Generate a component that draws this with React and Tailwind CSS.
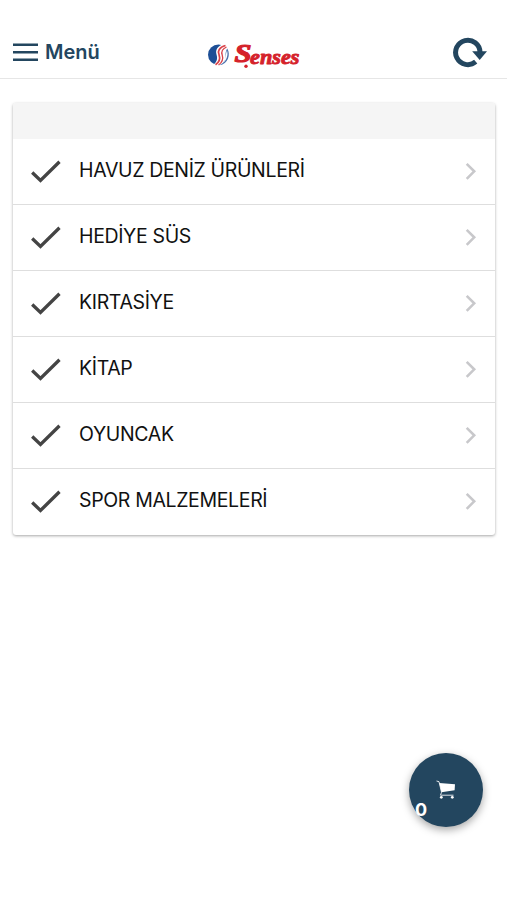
const categories = [
  'HAVUZ DENİZ ÜRÜNLERİ',
  'HEDİYE SÜS',
  'KIRTASİYE',
  'KİTAP',
  'OYUNCAK',
  'SPOR MALZEMELERİ',
]

function Logo() {
  return (
    <svg width="96" height="30" viewBox="0 0 96 30" role="img" aria-label="Senses">
      {/* emblem */}
      <ellipse cx="12.500" cy="14.800" rx="10.500" ry="10.200" fill="#1d4f96" />
      <path d="M18 4C11.500 6 9 10 10.500 14.500C12 19 10.500 22.500 7 25L16 26L23 20L24 9Z" fill="#fff" />
      <path d="M19.500 5.500C13 7.500 11.500 11 13 14.500C14.500 19 13 22.500 9.500 24.800" fill="none" stroke="#d9434a" strokeWidth="1.700" />
      <path d="M20.500 7C16 9 15 11.500 16.200 15C17.500 19 16 22.500 12.500 25" fill="none" stroke="#d9434a" strokeWidth="1.300" />
      <path d="M21.300 8.500C25 14.500 22 24 13.500 25.200C17.500 23 20 20 19.600 16C19.400 13 19.800 10.500 21.300 8.500Z" fill="#4a72ad" />
      <path d="M21 10.500C22.500 15 20.500 20 17.500 22.500C20 18.500 19.500 14 21 10.500Z" fill="#fff" />
      {/* wordmark */}
      <g
        className="font-['Liberation_Serif',serif] font-bold italic"
        fill="#d5222b"
        stroke="#d5222b"
        strokeLinejoin="round"
      >
        <text x="28.500" y="22.300" fontSize="26" strokeWidth="1.200" textLength="17" lengthAdjust="spacingAndGlyphs">S</text>
        <text x="44" y="24" fontSize="21" strokeWidth="0.900" textLength="49.500" lengthAdjust="spacingAndGlyphs">enses</text>
      </g>
      <circle cx="40" cy="26.300" r="1.700" fill="#d5222b" />
    </svg>
  )
}

function MenuIcon() {
  return (
    <svg width="25" height="20" viewBox="0 0 25 20" fill="none" stroke="#23465f" strokeWidth="2.400">
      <path d="M0 2.800H25M0 10.300H25M0 17.800H25" />
    </svg>
  )
}

function RefreshIcon() {
  return (
    <svg width="36" height="32" viewBox="0 0 36 32">
      <path d="M28 15.300A12.200 12.200 0 1 0 23.700 24.700" fill="none" stroke="#23465f" strokeWidth="5" />
      <path d="M20.200 14.300H35L27.700 23Z" fill="#23465f" />
    </svg>
  )
}

function CheckIcon() {
  return (
    <svg width="30" height="24" viewBox="0 0 30 24" fill="none" stroke="#444" strokeWidth="3.300">
      <path d="M1.200 12.500L9.500 20.500L28.500 1.800" />
    </svg>
  )
}

function ChevronIcon() {
  return (
    <svg width="12" height="20" viewBox="0 0 12 20" fill="none" stroke="#c8c8cb" strokeWidth="2.600">
      <path d="M1.700 1.800L9.200 9.300L1.700 16.800" />
    </svg>
  )
}

function CartIcon() {
  return (
    <svg width="20" height="20" viewBox="0 0 20 20">
      <path d="M3.300 3L19 4.300L18.600 10.300L5.500 12.300Z" fill="#fff" />
      <path d="M0.500 1L3 1.700L5.500 12.300L4.500 15.200H17.500" fill="none" stroke="#fff" strokeOpacity="0.850" strokeWidth="1" />
      <circle cx="5.300" cy="17.300" r="1.400" fill="#fff" />
      <circle cx="16.300" cy="17.300" r="1.400" fill="#fff" />
    </svg>
  )
}

export default function App() {
  return (
    <div className="relative h-[900px] w-[507px] overflow-hidden bg-white font-['Inter',sans-serif]">
      <header className="flex h-[79px] items-start justify-between border-b border-[#e6e6e6] pl-[13px] pr-[19px]">
        <button className="mt-[37px] flex h-[30px] w-[192px] items-center gap-[7px]">
          <MenuIcon />
          <span className="text-[20px] font-semibold leading-[30px] text-[#23465f]">Menü</span>
        </button>
        <div className="mt-10">
          <Logo />
        </div>
        <button className="mt-[37px] flex w-[186px] justify-end">
          <RefreshIcon />
        </button>
      </header>

      <main className="px-[13px] pt-6">
        <div className="w-[482px] overflow-hidden rounded-[3px] bg-white shadow-[0_1px_3px_rgba(0,0,0,0.35)]">
          <div className="h-9 bg-[#f5f5f5]" />
          <ul>
            {categories.map(name => (
              <li
                key={name}
                className="flex h-[66px] items-center border-b border-[#dedede] pl-[18px] pr-[18px] last:border-b-transparent"
              >
                <CheckIcon />
                <span className="ml-[18px] flex-1 pb-1 text-[19.5px] leading-6 tracking-[-0.35px] text-[#111]">
                  {name}
                </span>
                <ChevronIcon />
              </li>
            ))}
          </ul>
        </div>
      </main>

      <button className="absolute left-[409px] top-[753px] flex size-[74px] items-center justify-center rounded-full bg-[#23465f] pb-px shadow-[0_3px_8px_rgba(0,0,0,0.35)]">
        <CartIcon />
        <span className="absolute bottom-[5px] left-[6px] text-[18px] font-bold leading-6 text-white">0</span>
      </button>
    </div>
  )
}
